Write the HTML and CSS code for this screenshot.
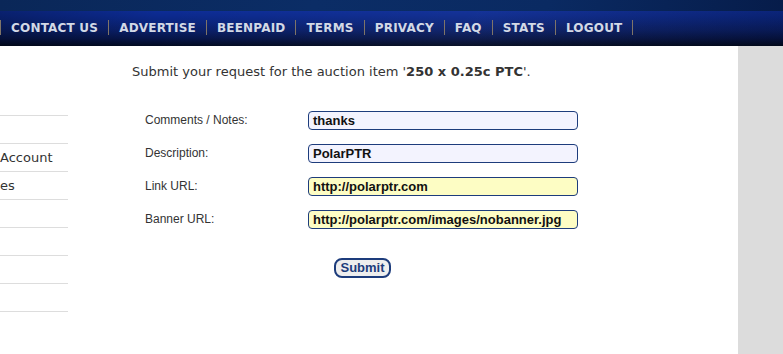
FILE: index.html
```html
<!DOCTYPE html>
<html>
<head>
<meta charset="utf-8">
<link rel="stylesheet" href="styles.css">
</head>
<body>
<div class="header">
  <div class="topband"></div>
  <div class="navband">
    <ul class="nav">
      <li>CONTACT US</li>
      <li>ADVERTISE</li>
      <li>BEENPAID</li>
      <li>TERMS</li>
      <li>PRIVACY</li>
      <li>FAQ</li>
      <li>STATS</li>
      <li>LOGOUT</li>
    </ul>
  </div>
</div>
<div class="main">
  <div class="sidebar">
    <ul class="side">
      <li></li>
      <li>Account</li>
      <li>es</li>
      <li></li>
      <li></li>
      <li></li>
      <li class="last"></li>
    </ul>
  </div>
  <div class="content">
    <p class="intro">Submit your request for the auction item '<b>250 x 0.25c PTC</b>'.</p>
    <div class="form">
      <label>Comments / Notes:</label>
      <div class="field blue">thanks</div>
      <label>Description:</label>
      <div class="field blue">PolarPTR</div>
      <label>Link URL:</label>
      <div class="field yellow">http://polarptr.com</div>
      <label>Banner URL:</label>
      <div class="field yellow">http://polarptr.com/images/nobanner.jpg</div>
    </div>
    <div class="actions"><span class="btn">Submit</span></div>
  </div>
  <div class="gray"></div>
</div>
</body>
</html>
```
FILE: styles.css
```css
html, body { margin: 0; padding: 0; background: #fff; }
body { width: 783px; height: 354px; overflow: hidden; font-family: "DejaVu Sans", Verdana, sans-serif; }
.header { height: 46px; background: #061b4a; }
.topband { height: 11px; background: linear-gradient(100deg, #0a2758 0%, #0b2d66 40%, #0a2a62 70%, #061c4a 100%); }
.navband {
  height: 35px;
  background:
    linear-gradient(120deg, rgba(0,0,0,0.25) 0%, rgba(0,0,0,0) 20%, rgba(255,255,255,0.03) 60%, rgba(0,0,0,0.2) 100%),
    linear-gradient(180deg, #0d2c96 0%, #0b2888 20%, #0a1f68 55%, #061446 80%, #020a20 100%);
}
.nav { list-style: none; margin: 0 0 0 1px; padding: 0; display: flex; height: 33px; align-items: center; }
.nav li {
  font-weight: bold; font-size: 12px; letter-spacing: 0.2px; color: #d3d9e6; padding: 0 10px; line-height: 16px;
  position: relative; margin-right: 1px;
}
.nav li::after { content: ""; position: absolute; right: -1px; top: 0; width: 1px; height: 15px; background: #7f7468; }
.nav li:first-child::before { content: ""; position: absolute; left: -1px; top: 0; width: 1px; height: 15px; background: #7f7468; }
.main { display: flex; height: 308px; }
.sidebar { width: 68px; padding-top: 69px; }
.side { list-style: none; margin: 0; padding: 0; }
.side li { height: 27px; border-top: 1px solid #dddddd; font-size: 13px; color: #333; line-height: 27px; }
.side li.last { border-bottom: 1px solid #dddddd; }
.content { width: 670px; }
.intro { margin: 18px 0 0 64px; font-size: 13px; line-height: 16px; color: #333; }
.intro b { font-weight: bold; }
.form { display: grid; grid-template-columns: 163px 270px; row-gap: 14px; margin: 31px 0 0 77px; }
.form label { font-family: "Liberation Sans", Arial, sans-serif; font-size: 12px; color: #333; line-height: 19px; }
.field {
  height: 17px; border: 1px solid #1d3c7c; border-radius: 4px; box-sizing: content-box;
  font-family: "Liberation Sans", Arial, sans-serif; font-weight: bold; font-size: 13px; color: #111;
  line-height: 17px; padding: 0 4px; width: 260px; white-space: nowrap;
}
.blue { background: #f3f3fe; }
.yellow { background: #fdfdc4; }
.actions { margin: 28px 0 0 266px; }
.btn {
  display: inline-block; height: 16px; width: 53px; border: 2px solid #1d3c7c; border-radius: 8px; background: #eeeeee;
  font-family: "Liberation Sans", Arial, sans-serif; font-weight: bold; font-size: 13px; color: #1d3c7c; line-height: 16px; text-align: center;
}
.gray { width: 45px; background: #dcdcdc; }
```
